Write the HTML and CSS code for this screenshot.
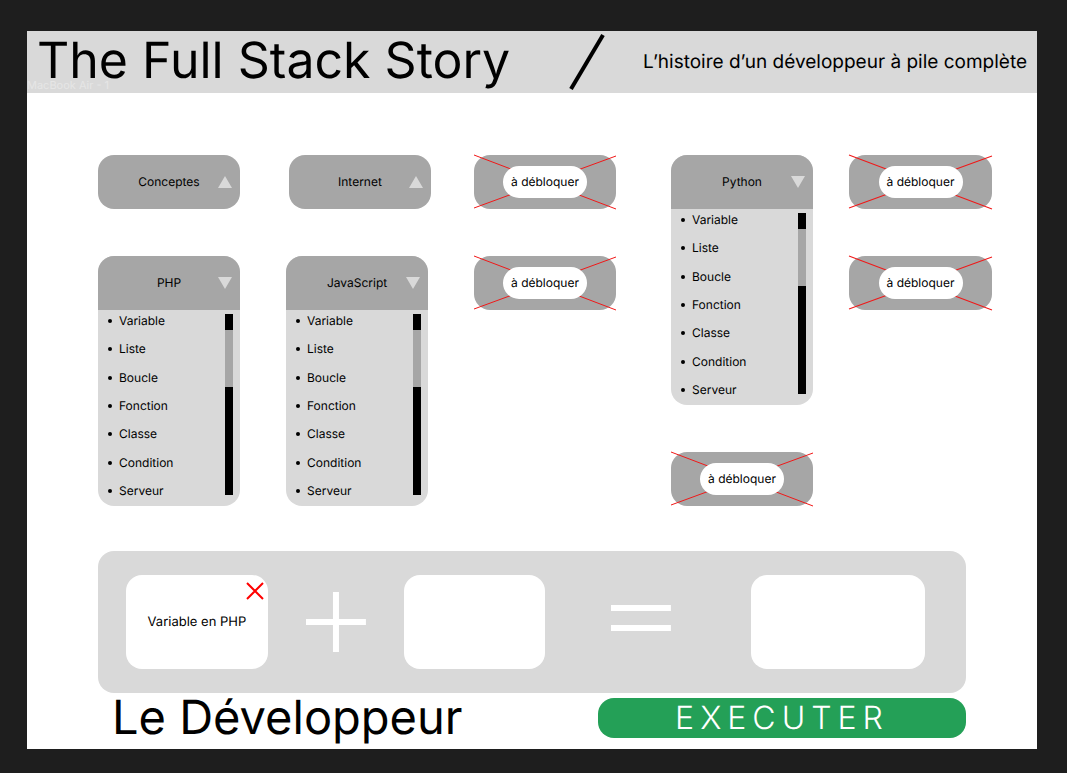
FILE: index.html
```html
<!DOCTYPE html>
<html lang="fr">
<head>
<meta charset="utf-8">
<meta name="viewport" content="width=device-width, initial-scale=1">
<title>The Full Stack Story</title>
<link rel="stylesheet" href="styles.css">
</head>
<body>
<div class="frame">
  <header class="header">
    <h1 class="title">The Full Stack Story</h1>
    <svg class="slash" viewBox="0 0 36 58" aria-hidden="true"><path d="M2 56 34 2"/></svg>
    <p class="subtitle">L’histoire d’un développeur à pile complète</p>
    <span class="frame-name">MacBook Air - 1</span>
  </header>

  <main class="main">
    <section class="board">
      <div class="column column-1">
        <article class="card">
          <button class="card-head" type="button" aria-expanded="false"><span class="card-label">Conceptes</span><svg class="arrow" viewBox="0 0 14 12" aria-hidden="true"><path d="M7 0 14 12H0z"/></svg></button>
        </article>
        <article class="card">
          <button class="card-head" type="button" aria-expanded="true"><span class="card-label">PHP</span><svg class="arrow" viewBox="0 0 14 12" aria-hidden="true"><path d="M0 0H14L7 12z"/></svg></button>
          <div class="card-body">
            <ul class="list"><li>Variable</li><li>Liste</li><li>Boucle</li><li>Fonction</li><li>Classe</li><li>Condition</li><li>Serveur</li></ul>
            <div class="track"><div class="thumb"></div></div>
          </div>
        </article>
      </div>

      <div class="column column-2">
        <article class="card card-end">
          <button class="card-head" type="button" aria-expanded="false"><span class="card-label">Internet</span><svg class="arrow" viewBox="0 0 14 12" aria-hidden="true"><path d="M7 0 14 12H0z"/></svg></button>
        </article>
        <article class="card">
          <button class="card-head" type="button" aria-expanded="true"><span class="card-label">JavaScript</span><svg class="arrow" viewBox="0 0 14 12" aria-hidden="true"><path d="M0 0H14L7 12z"/></svg></button>
          <div class="card-body">
            <ul class="list"><li>Variable</li><li>Liste</li><li>Boucle</li><li>Fonction</li><li>Classe</li><li>Condition</li><li>Serveur</li></ul>
            <div class="track"><div class="thumb"></div></div>
          </div>
        </article>
      </div>

      <div class="column column-3">
        <article class="locked">
          <svg class="cross" viewBox="0 0 142 54" preserveAspectRatio="none" aria-hidden="true"><path d="M0 0 142 54M0 53 142 1"/></svg>
          <button class="pill" type="button">à débloquer</button>
        </article>
        <article class="locked">
          <svg class="cross" viewBox="0 0 142 54" preserveAspectRatio="none" aria-hidden="true"><path d="M0 0 142 54M0 53 142 1"/></svg>
          <button class="pill" type="button">à débloquer</button>
        </article>
      </div>

      <div class="column column-4">
        <article class="card">
          <button class="card-head" type="button" aria-expanded="true"><span class="card-label">Python</span><svg class="arrow" viewBox="0 0 14 12" aria-hidden="true"><path d="M0 0H14L7 12z"/></svg></button>
          <div class="card-body">
            <ul class="list"><li>Variable</li><li>Liste</li><li>Boucle</li><li>Fonction</li><li>Classe</li><li>Condition</li><li>Serveur</li></ul>
            <div class="track"><div class="thumb"></div></div>
          </div>
        </article>
        <article class="locked">
          <svg class="cross" viewBox="0 0 142 54" preserveAspectRatio="none" aria-hidden="true"><path d="M0 0 142 54M0 53 142 1"/></svg>
          <button class="pill" type="button">à débloquer</button>
        </article>
      </div>

      <div class="column column-5">
        <article class="locked">
          <svg class="cross" viewBox="0 0 142 54" preserveAspectRatio="none" aria-hidden="true"><path d="M0 0 142 54M0 53 142 1"/></svg>
          <button class="pill" type="button">à débloquer</button>
        </article>
        <article class="locked">
          <svg class="cross" viewBox="0 0 142 54" preserveAspectRatio="none" aria-hidden="true"><path d="M0 0 142 54M0 53 142 1"/></svg>
          <button class="pill" type="button">à débloquer</button>
        </article>
      </div>
    </section>

    <section class="formula">
      <div class="slot slot-first">
        <span>Variable en PHP</span>
        <button class="remove" type="button" aria-label="Retirer"><svg viewBox="0 0 18 18" aria-hidden="true"><path d="M1 1 17 17M17 1 1 17"/></svg></button>
      </div>
      <svg class="operator plus" viewBox="0 0 60 60" aria-hidden="true"><path d="M0 30H60M30 0V60"/></svg>
      <div class="slot slot-second"></div>
      <svg class="operator equals" viewBox="0 0 60 60" aria-hidden="true"><path d="M0 16H60M0 36H60"/></svg>
      <div class="slot slot-result"></div>
    </section>

    <footer class="footer">
      <h2 class="role">Le Développeur</h2>
      <button class="execute" type="button">EXECUTER</button>
    </footer>
  </main>
</div>
</body>
</html>
```
FILE: styles.css
```css
* { box-sizing: border-box; }

body {
  margin: 0;
  padding: 31px 30px 24px 27px;
  background: #1e1e1e;
  color: #000;
  font-family: Inter, "Liberation Sans", sans-serif;
  font-size: 12px;
  line-height: 16px;
  text-rendering: geometricPrecision;
}

button {
  margin: 0;
  padding: 0;
  border: 0;
  background: none;
  color: inherit;
  font: inherit;
  text-rendering: inherit;
  cursor: pointer;
}

.frame { background: #fff; }

.header {
  position: relative;
  display: flex;
  align-items: center;
  padding: 0 10px;
  height: 62px;
  background: #d9d9d9;
}

.title {
  align-self: flex-start;
  margin: 0;
  font-size: 50px;
  font-weight: 400;
  line-height: 60px;
  white-space: nowrap;
}

.slash {
  width: 36px;
  height: 58px;
  margin: 0 38px 0 auto;
  fill: none;
  stroke: #000;
  stroke-width: 4;
}

.subtitle {
  margin: 0;
  font-size: 19px;
  line-height: 24px;
  white-space: nowrap;
}

.frame-name {
  position: absolute;
  left: 0;
  bottom: 0;
  color: #e6e6e6;
  font-size: 11px;
}

.main { padding: 62px 45px 11px 71px; }

.board {
  display: grid;
  grid-template-columns: 142fr 46fr 145fr 43fr 142fr 55fr 142fr 36fr 143fr;
}

.column {
  display: flex;
  flex-direction: column;
  gap: 47px;
}

.column-1 { grid-column: 1; }
.column-2 { grid-column: 3; }
.column-3 { grid-column: 5; }
.column-4 { grid-column: 7; }
.column-5 { grid-column: 9; }

.card {
  border-radius: 16px;
  background: #d9d9d9;
  overflow: hidden;
}

.column-2 .card { width: 98%; }
.card-end { align-self: flex-end; }

.card-head {
  display: grid;
  grid-template-columns: 1fr auto 1fr;
  align-items: center;
  width: 100%;
  height: 54px;
  padding: 0 8px;
  background: #a6a6a6;
}

.card-label { grid-column: 2; }

.arrow {
  justify-self: end;
  width: 14px;
  height: 12px;
  fill: #d9d9d9;
}

.card-body {
  display: flex;
  justify-content: space-between;
  height: 196px;
  padding: 3px 7px 7px 10px;
}

.list {
  display: flex;
  flex-direction: column;
  justify-content: space-between;
  margin: 0;
  padding: 0;
  list-style: none;
}

.list li {
  display: flex;
  align-items: center;
  gap: 7px;
}

.list li::before {
  content: "";
  width: 4px;
  height: 4px;
  border-radius: 50%;
  background: #000;
}

.track {
  width: 8px;
  margin: 1px 0 4px;
  padding-top: 16px;
  background: #000;
}

.thumb {
  height: 57px;
  background: #a6a6a6;
}

.locked {
  position: relative;
  display: flex;
  align-items: center;
  justify-content: center;
  height: 54px;
  border-radius: 16px;
  background: #a6a6a6;
}

.cross {
  position: absolute;
  inset: 0;
  width: 100%;
  height: 100%;
  overflow: visible;
  fill: none;
  stroke: #f01818;
  stroke-width: 1;
}

.pill {
  position: relative;
  width: 84px;
  height: 32px;
  border-radius: 16px;
  background: #fff;
}

.formula {
  display: grid;
  grid-template-columns: 142fr 38fr 60fr 38fr 142fr 66fr 60fr 80fr 174fr;
  align-items: center;
  margin: 45px 26px 0 0;
  padding: 24px 41px 24px 28px;
  border-radius: 16px;
  background: #d9d9d9;
}

.slot {
  position: relative;
  display: flex;
  align-items: center;
  justify-content: center;
  height: 94px;
  border-radius: 16px;
  background: #fff;
  font-size: 13px;
}

.slot-first { grid-column: 1; }
.plus { grid-column: 3; }
.slot-second { grid-column: 5; }
.equals { grid-column: 7; }
.slot-result { grid-column: 9; }

.remove {
  position: absolute;
  top: 7px;
  right: 4px;
  width: 18px;
  height: 18px;
}

.remove svg {
  display: block;
  fill: none;
  stroke: #f00;
  stroke-width: 2;
}

.operator {
  width: 100%;
  fill: none;
  stroke: #fff;
  stroke-width: 6;
}

.footer {
  display: flex;
  align-items: center;
  justify-content: space-between;
  margin: 5px 26px 0 0;
  padding-left: 14px;
}

.role {
  margin: 0;
  font-size: 47px;
  font-weight: 400;
  line-height: 40px;
}

.execute {
  width: 368px;
  height: 40px;
  border-radius: 16px;
  background: #24a057;
  color: #fff;
  font-size: 32px;
  font-weight: 300;
  letter-spacing: 6px;
}
```
